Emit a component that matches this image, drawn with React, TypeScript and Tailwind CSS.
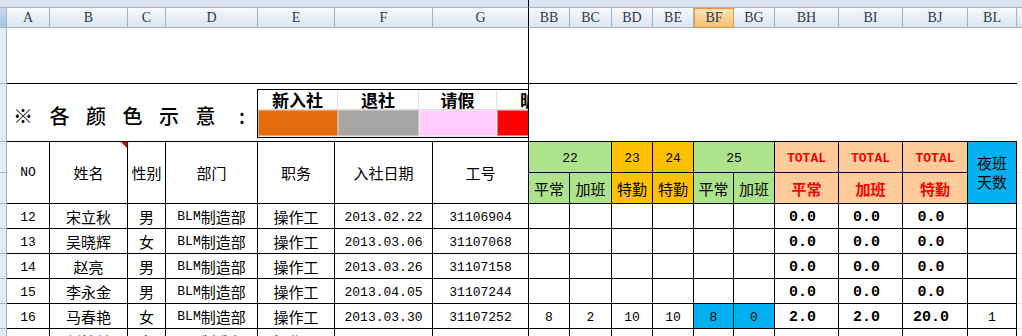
import React from "react";

const B =
  "flex items-center justify-center border-r border-b border-black whitespace-nowrap overflow-hidden leading-none";
const CJK = "font-['Noto_Sans_CJK_SC',sans-serif] text-[15px]";
const MONO = "font-['Liberation_Mono',monospace] text-[13px]";
const BMONO = "font-['Liberation_Mono',monospace] text-[15px] font-bold";
const STRIP = "bg-[#e4ecf7] border-r border-b border-[#9eb6ce]";
const EXTRA = "border-b border-[#dfe4ea]";
const HDR =
  "flex items-center justify-center bg-linear-to-b from-[#f7f9fc] to-[#dce5f0] border-r border-b border-[#9eb6ce] font-['Liberation_Serif',serif] text-[14px] text-[#2b3a4e] leading-none";

const leftCols = ["A", "B", "C", "D", "E", "F", "G"];
const rightCols = ["BB", "BC", "BD", "BE", "BF", "BG", "BH", "BI", "BJ", "BL"];

type Row = {
  no: string;
  name: string;
  sex: string;
  date: string;
  id: string;
  vals: string[];
  totals: string[];
  night: string;
  blue?: boolean;
};

const rows: Row[] = [
  { no: "12", name: "宋立秋", sex: "男", date: "2013.02.22", id: "31106904", vals: ["", "", "", "", "", ""], totals: ["0.0", "0.0", "0.0"], night: "" },
  { no: "13", name: "吴晓辉", sex: "女", date: "2013.03.06", id: "31107068", vals: ["", "", "", "", "", ""], totals: ["0.0", "0.0", "0.0"], night: "" },
  { no: "14", name: "赵亮", sex: "男", date: "2013.03.26", id: "31107158", vals: ["", "", "", "", "", ""], totals: ["0.0", "0.0", "0.0"], night: "" },
  { no: "15", name: "李永金", sex: "男", date: "2013.04.05", id: "31107244", vals: ["", "", "", "", "", ""], totals: ["0.0", "0.0", "0.0"], night: "" },
  { no: "16", name: "马春艳", sex: "女", date: "2013.03.30", id: "31107252", vals: ["8", "2", "10", "10", "8", "0"], totals: ["2.0", "2.0", "20.0"], night: "1", blue: true },
  { no: "17", name: "刘桂兰", sex: "女", date: "2013.04.08", id: "31107260", vals: ["", "", "", "", "", ""], totals: ["0.0", "0.0", "0.0"], night: "" },
];

const legendChars = ["※", "各", "颜", "色", "示", "意", ":"];

export default function App() {
  return (
    <div className="w-[1022px] h-[336px] overflow-hidden bg-white text-black grid grid-cols-[7px_43px_78px_38px_92px_77px_98px_96px_41px_42px_41px_41px_40px_41px_64px_64px_65px_49px_5px] grid-rows-[8px_20px_56px_58px_31px_31px_25px_25px_25px_25px_25px_25px]">
      {/* top strip */}
      <div className="col-span-8 bg-[#dbe5f1] border-b border-b-[#a9b3be] border-r border-r-black" />
      <div className="col-span-11 bg-[#dbe5f1] border-b border-b-[#a9b3be]" />

      {/* column header row */}
      <div className="bg-linear-to-b from-[#c9daf0] to-[#a9c3e4] border-r border-b border-[#9eb6ce]" />
      {leftCols.map((c) => (
        <div
          key={c}
          className={
            c === "G"
              ? "flex items-center justify-center bg-linear-to-b from-[#f7f9fc] to-[#dce5f0] border-r border-b border-b-[#9eb6ce] border-r-black font-['Liberation_Serif',serif] text-[14px] text-[#2b3a4e] leading-none"
              : HDR
          }
        >
          {c}
        </div>
      ))}
      {rightCols.map((c) => (
        <div
          key={c}
          className={
            c === "BF"
              ? "flex items-center justify-center bg-linear-to-b from-[#fbe4b8] to-[#f4c171] border border-[#f29436] font-['Liberation_Serif',serif] text-[14px] text-[#2b3a4e] leading-none"
              : HDR
          }
        >
          {c}
        </div>
      ))}
      <div className="bg-linear-to-b from-[#f7f9fc] to-[#dce5f0] border-b border-[#9eb6ce]" />

      {/* row 1 blank */}
      <div className={STRIP} />
      <div className="col-span-7 border-r border-b border-black" />
      <div className="col-span-10 border-b border-black" />
      <div />

      {/* row 2 legend */}
      <div className={STRIP} />
      <div className="col-span-7 border-r border-b border-black flex items-start overflow-hidden">
        <div className="w-[250px] h-full shrink-0 flex items-center pl-[6px] pt-[7px] gap-[16.5px] font-['Noto_Sans_CJK_SC',sans-serif] text-[20px] font-medium leading-none">
          {legendChars.map((ch, i) => (
            <span key={i} className="w-[20px] text-center">
              {ch}
            </span>
          ))}
        </div>
        <div className="mt-[5px] h-[49px] w-[330px] shrink-0 border border-black flex flex-col bg-white">
          <div className="h-[20px] flex border-b border-[#d9d9d9] font-['Noto_Sans_CJK_SC',sans-serif] text-[17px] font-bold leading-none">
            <div className="w-[80px] flex items-center justify-center border-r border-[#dde3ec]">新入社</div>
            <div className="w-[81px] flex items-center justify-center border-r border-[#dde3ec]">退社</div>
            <div className="w-[78px] flex items-center justify-center border-r border-[#dde3ec]">请假</div>
            <div className="w-[80px] flex items-center justify-center">旷工</div>
          </div>
          <div className="h-[27px] flex bg-[#e6e6e6] pb-[1px]">
            <div className="w-[80px] bg-[#e46c0a] border border-[#f5a264]" />
            <div className="w-[81px] bg-[#a5a5a5] border border-[#c4c4c4]" />
            <div className="w-[78px] bg-[#ffccff] border border-[#ffe2ff]" />
            <div className="w-[80px] bg-[#ff0000] border border-[#ff7a7a]" />
          </div>
        </div>
      </div>
      <div className="col-span-10 border-b border-black" />
      <div />

      {/* header row a */}
      <div className={STRIP} />
      <div className={`${B} row-span-2 ${MONO}`}>NO</div>
      <div className={`${B} row-span-2 ${CJK} relative`}>
        姓名
        <span className="absolute top-0 right-0 w-0 h-0 border-l-[6px] border-l-transparent border-t-[6px] border-t-[#e00000]" />
      </div>
      <div className={`${B} row-span-2 ${CJK}`}>性别</div>
      <div className={`${B} row-span-2 ${CJK}`}>部门</div>
      <div className={`${B} row-span-2 ${CJK}`}>职务</div>
      <div className={`${B} row-span-2 ${CJK}`}>入社日期</div>
      <div className={`${B} row-span-2 ${CJK}`}>工号</div>
      <div className={`${B} col-span-2 bg-[#ade38b] ${MONO} pt-[2px]`}>22</div>
      <div className={`${B} bg-[#ffc000] ${MONO} pt-[2px]`}>23</div>
      <div className={`${B} bg-[#ffc000] ${MONO} pt-[2px]`}>24</div>
      <div className={`${B} col-span-2 bg-[#ade38b] ${MONO} pt-[2px]`}>25</div>
      <div className={`${B} bg-[#ffcc99] font-['Liberation_Mono',monospace] text-[13px] font-bold text-[#ff0000] pt-[2px]`}>TOTAL</div>
      <div className={`${B} bg-[#ffcc99] font-['Liberation_Mono',monospace] text-[13px] font-bold text-[#ff0000] pt-[2px]`}>TOTAL</div>
      <div className={`${B} bg-[#ffcc99] font-['Liberation_Mono',monospace] text-[13px] font-bold text-[#ff0000] pt-[2px]`}>TOTAL</div>
      <div className={`${B} row-span-2 bg-[#00b0f0] ${CJK} flex-col gap-[3px]`}>
        <span className="block h-[16px] leading-[16px]">夜班</span>
        <span className="block h-[16px] leading-[16px]">天数</span>
      </div>
      <div className={EXTRA} />

      {/* header row b */}
      <div className={STRIP} />
      <div className={`${B} bg-[#ade38b] ${CJK}`}>平常</div>
      <div className={`${B} bg-[#ade38b] ${CJK}`}>加班</div>
      <div className={`${B} bg-[#ffc000] ${CJK}`}>特勤</div>
      <div className={`${B} bg-[#ffc000] ${CJK}`}>特勤</div>
      <div className={`${B} bg-[#ade38b] ${CJK}`}>平常</div>
      <div className={`${B} bg-[#ade38b] ${CJK}`}>加班</div>
      <div className={`${B} bg-[#ffcc99] ${CJK} font-bold text-[#ff0000]`}>平常</div>
      <div className={`${B} bg-[#ffcc99] ${CJK} font-bold text-[#ff0000]`}>加班</div>
      <div className={`${B} bg-[#ffcc99] ${CJK} font-bold text-[#ff0000]`}>特勤</div>
      <div className={EXTRA} />

      {/* data rows */}
      {rows.map((r) => (
        <React.Fragment key={r.no}>
          <div className={STRIP} />
          <div className={`${B} ${MONO} pt-[2px]`}>{r.no}</div>
          <div className={`${B} ${CJK} pt-[1px]`}>{r.name}</div>
          <div className={`${B} ${CJK} pt-[1px]`}>{r.sex}</div>
          <div className={`${B} ${CJK} pt-[1px]`}>
            <span className="font-['Liberation_Mono',monospace] text-[13px]">BLM</span>制造部
          </div>
          <div className={`${B} ${CJK} pt-[1px]`}>操作工</div>
          <div className={`${B} ${MONO} pt-[2px]`}>{r.date}</div>
          <div className={`${B} ${MONO} pt-[2px]`}>{r.id}</div>
          {r.vals.map((v, i) => (
            <div
              key={i}
              className={
                r.blue && i >= 4
                  ? `${B} ${MONO} pt-[2px] bg-[#00b0f0]`
                  : `${B} ${MONO} pt-[2px]`
              }
            >
              {v}
            </div>
          ))}
          {r.totals.map((t, i) => (
            <div key={i} className={`${B} ${BMONO} pt-[2px] pr-[8px]`}>
              {t}
            </div>
          ))}
          <div className={`${B} ${MONO} pt-[2px]`}>{r.night}</div>
          <div className={EXTRA} />
        </React.Fragment>
      ))}
    </div>
  );
}
